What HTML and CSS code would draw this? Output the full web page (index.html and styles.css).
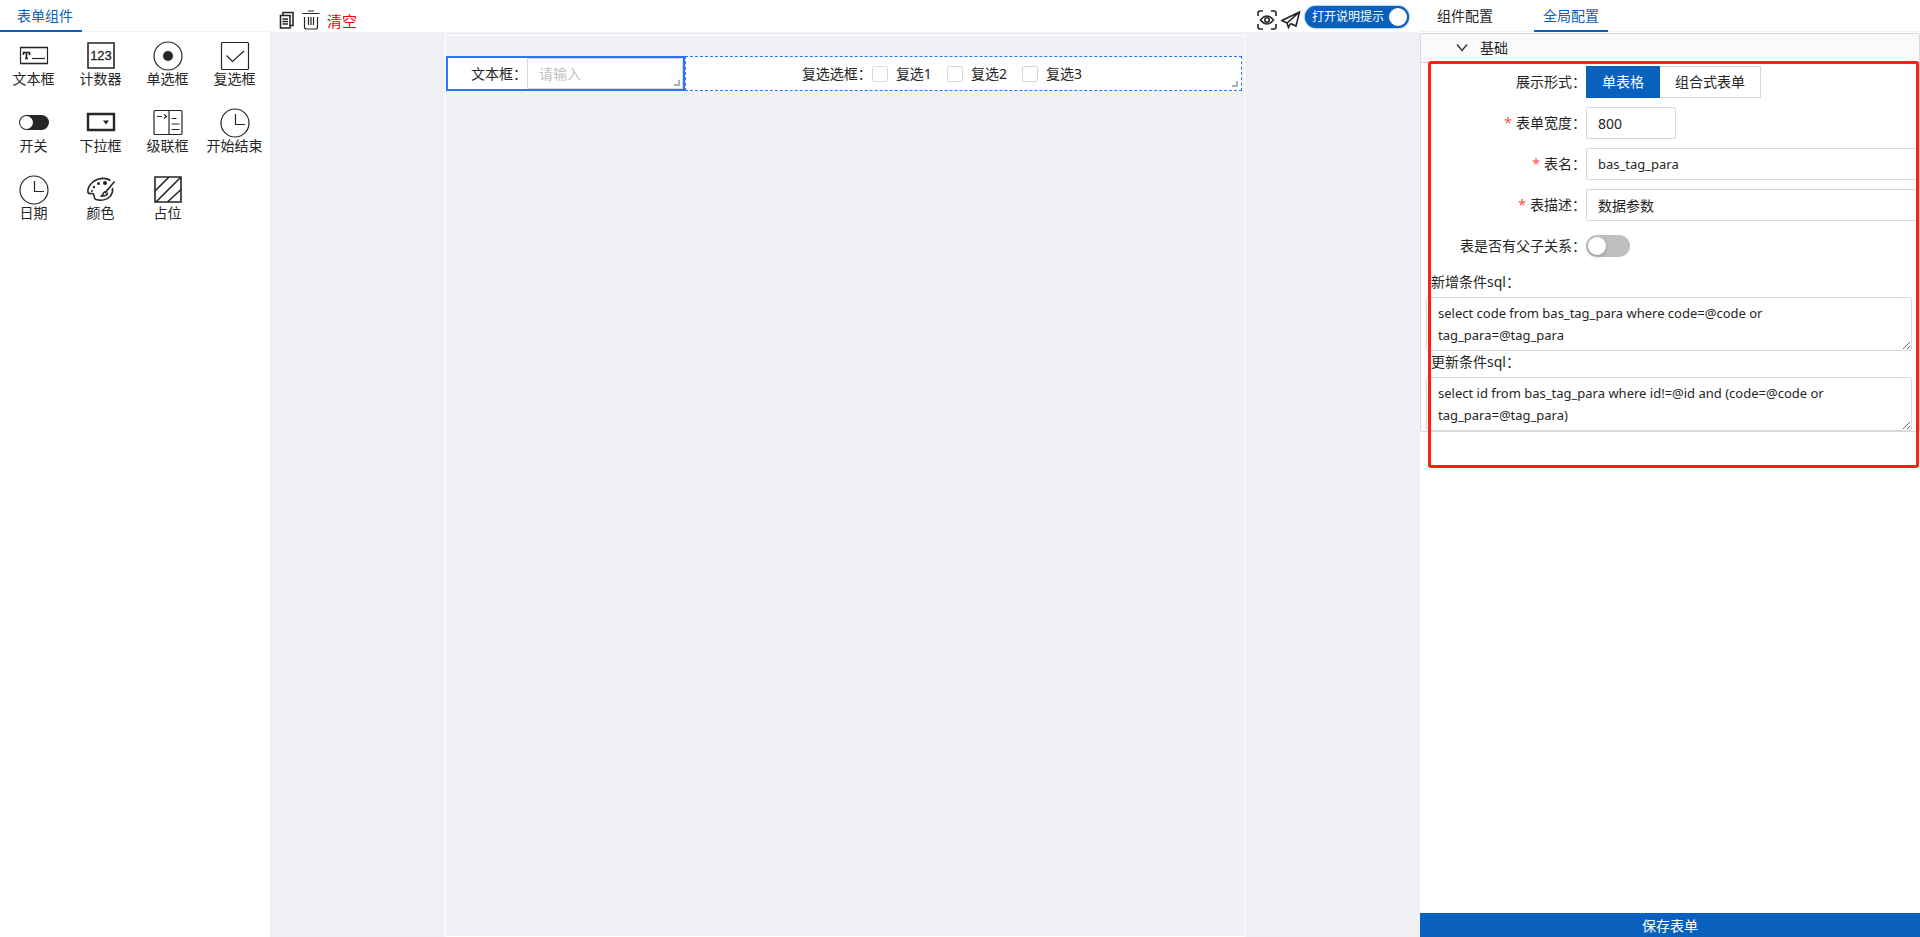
FILE: index.html
```html
<!DOCTYPE html>
<html lang="zh-CN">
<head>
<meta charset="utf-8">
<title>表单设计器</title>
<link rel="stylesheet" href="styles.css">
</head>
<body>
<div class="designer">
  <aside class="palette">
    <nav class="tabs"><button class="tab tab-active tab-palette">表单组件</button></nav>
    <div class="tools">
      <button class="tool"><svg viewBox="0 0 32 32"><path d="M2.500 7.500h27v16h-27z" class="s"/><path d="M2.500 7.500h27" class="b"/><path d="M2.500 23.500h27" class="b"/><path d="M5.500 15v-2.500h6V15M8.500 12.500v6M7 18.500h3" class="b"/><path d="M14 18.500h13" class="s"/></svg><span>文本框</span></button>
      <button class="tool"><svg viewBox="0 0 32 32"><path d="M3 3h26v25H3z" class="b"/><text x="16" y="20" class="digits">123</text></svg><span>计数器</span></button>
      <button class="tool"><svg viewBox="0 0 32 32"><circle cx="16" cy="16" r="14" class="s"/><circle cx="16" cy="16" r="5" class="f"/></svg><span>单选框</span></button>
      <button class="tool"><svg viewBox="0 0 32 32"><rect x="2.500" y="2.500" width="27" height="27" rx="1" class="s"/><path d="M7.500 15.500l6 6L25 11" class="s"/></svg><span>复选框</span></button>
      <button class="tool"><svg viewBox="0 0 32 32"><rect x="1" y="8" width="30" height="15" rx="7.500" class="f"/><circle cx="8.500" cy="15.500" r="6.500" class="w"/></svg><span>开关</span></button>
      <button class="tool"><svg viewBox="0 0 32 32"><path d="M3 7h26v16H3z" class="k"/><path d="M18 13.500h6l-3 4z" class="f"/></svg><span>下拉框</span></button>
      <button class="tool"><svg viewBox="0 0 32 32"><rect x="2" y="3.500" width="28" height="24" rx="1" class="s"/><path d="M17 3.500v24M5 9.500h5M12 7.500l2.500 2-2.500 2M19.500 11.500h5M19.500 17h8M19.500 22.500h8" class="s"/></svg><span>级联框</span></button>
      <button class="tool"><svg viewBox="0 0 32 32"><circle cx="16" cy="16" r="14" class="s"/><path d="M16.500 7v10.500H26" class="s"/></svg><span>开始结束</span></button>
      <button class="tool"><svg viewBox="0 0 32 32"><circle cx="16" cy="16" r="14" class="s"/><path d="M16.500 7v10.500H26" class="s"/></svg><span>日期</span></button>
      <button class="tool"><svg viewBox="0 0 32 32"><path d="M25.500 6.500C21 3.500 14 3.500 8.500 7.500c-5 4-6 8-5.500 11 1.500 2.500 4 0 5.500 1.500 1.500 2-.5 4 2.500 5.500 5 1.500 11 .5 14.500-3.500 2-2.500 2.500-5 2-8" class="b"/><path d="M29.500 7.500L20 19" class="b"/><path d="M21 17.500c-3 0-2.500 3-4.500 4.500 3 .5 6-1 6-3.500" class="b"/><circle cx="20" cy="9" r="2" class="f"/><circle cx="13.500" cy="9.500" r="1.500" class="f"/><circle cx="9" cy="13" r="1.200" class="f"/><circle cx="7" cy="17" r="1" class="f"/></svg><span>颜色</span></button>
      <button class="tool"><svg viewBox="0 0 32 32"><path d="M3 3h26v25H3z" class="b"/><path d="M3 17L17 3M4 28L28.500 3.500M15.500 28L29 15.500" class="b"/></svg><span>占位</span></button>
    </div>
  </aside>

  <main class="stage">
    <header class="toolbar">
      <button class="icon-button" aria-label="复制"><svg width="16" height="18" viewBox="0 0 16 18"><path d="M1.500 4.500h9.500v12.500H1.500zM4 4.500V1.500h10v13h-3M3.500 8h5.500M3.500 10.500h5.500M3.500 13h5.500" class="b"/></svg></button>
      <button class="icon-button" aria-label="删除"><svg width="18" height="20" viewBox="0 0 18 20"><path d="M6 1h6M.5 3.500h17M2.500 7v10q0 2 2 2h9q2 0 2-2V7M6.500 7v8M9 7v8M11.500 7v8" class="s"/></svg></button>
      <button class="clear">清空</button>
      <span class="spacer"></span>
      <button class="icon-button" aria-label="预览"><svg width="20" height="20" viewBox="0 0 20 20"><path d="M1 6V3q0-2 2-2h3M14 1h3q2 0 2 2v3M19 14v3q0 2-2 2h-3M6 19H3q-2 0-2-2v-3" class="b"/><path d="M3.500 10q6.500-8 13 0q-6.500 8-13 0z" class="b"/><circle cx="10" cy="10" r="2.200" class="b"/></svg></button>
      <button class="icon-button" aria-label="发布"><svg width="20" height="18" viewBox="0 0 20 18"><path d="M18.500 1L1 9.500l5 2.500L18.500 1 15 15l-5.500-2.500M6 12l1.500 4.500 2-4" class="b"/></svg></button>
      <label class="hint-switch"><input type="checkbox" checked><span>打开说明提示</span></label>
    </header>
    <div class="canvas">
      <section class="widget widget-selected">
        <label for="sample">文本框：</label>
        <input id="sample" class="sample-input" type="text" placeholder="请输入">
        <i class="grip"></i>
      </section>
      <section class="widget widget-checks">
        <span>复选选框：</span>
        <label class="check"><input type="checkbox">复选1</label>
        <label class="check"><input type="checkbox">复选2</label>
        <label class="check"><input type="checkbox">复选3</label>
        <i class="grip"></i>
      </section>
    </div>
  </main>

  <aside class="settings">
    <nav class="tabs tabs-settings"><button class="tab">组件配置</button><button class="tab tab-active">全局配置</button></nav>
    <section class="collapse">
      <button class="collapse-head"><svg width="12" height="12" viewBox="0 0 12 12"><path d="M1 2.500l5 6 5-6" class="s"/></svg>基础</button>
      <form class="form">
        <div class="row"><span class="row-label">展示形式：</span>
          <div class="segment">
            <label class="segment-on"><input type="radio" name="mode" checked>单表格</label>
            <label><input type="radio" name="mode">组合式表单</label>
          </div>
        </div>
        <div class="row"><label class="row-label required" for="width">表单宽度：</label><input class="field field-short" id="width" value="800"></div>
        <div class="row"><label class="row-label required" for="table">表名：</label><input class="field field-code" id="table" value="bas_tag_para"></div>
        <div class="row"><label class="row-label required" for="desc">表描述：</label><input class="field" id="desc" value="数据参数"></div>
        <div class="row"><label class="row-label" for="tree">表是否有父子关系：</label><input class="switch" id="tree" type="checkbox"></div>
        <label class="sql-label" for="insert">新增条件sql：</label>
        <textarea class="sql" id="insert" rows="2" spellcheck="false">select code from bas_tag_para where code=@code or tag_para=@tag_para</textarea>
        <label class="sql-label" for="update">更新条件sql：</label>
        <textarea class="sql" id="update" rows="2" spellcheck="false">select id from bas_tag_para where id!=@id and (code=@code or tag_para=@tag_para)</textarea>
      </form>
      <div class="highlight"></div>
    </section>
    <button class="save">保存表单</button>
  </aside>
</div>
</body>
</html>
```
FILE: styles.css
```css
* { box-sizing: border-box; }
body {
  margin: 0;
  background: #fff;
  color: #262626;
  font: 14px/22px "Noto Sans", "Noto Sans CJK SC", sans-serif;
}
button, input, textarea { font: inherit; color: inherit; }
button { margin: 0; padding: 0; border: 0; background: none; cursor: pointer; }
svg { display: block; }
.s, .b, .k { fill: none; stroke: #262626; stroke-width: 1.2; }
.b { stroke-width: 1.6; }
.k { stroke-width: 2.4; }
.f { fill: #262626; }
.w { fill: #fff; }
.digits { font: 13px "Liberation Sans", sans-serif; text-anchor: middle; fill: #262626; stroke: #262626; stroke-width: .3; }

.designer { display: grid; grid-template-columns: 270px 1fr 500px; min-height: 100vh; }

.tabs { display: flex; height: 32px; border-bottom: 1px solid #f0f0f0; }
.tab { height: 32px; padding: 2px 9px 0; border-bottom: 2px solid transparent; }
.tab-palette { padding-left: 17px; }
.tab-active { color: #0960bd; border-bottom-color: #0960bd; }

.tools { display: grid; grid-template-columns: repeat(4, 67px); grid-auto-rows: 67px; }
.tool { display: flex; flex-direction: column; align-items: center; justify-content: flex-start; padding-top: 8px; white-space: nowrap; line-height: 14px; }
.tool svg { width: 32px; height: 32px; }

.stage { display: flex; flex-direction: column; background: #eff1f5; }
.toolbar { display: flex; align-items: center; height: 32px; padding: 7px 11px 0 9px; background: #fff; }
.icon-button { margin-right: 7px; }
.clear { padding-top: 2px; color: #f00; font-size: 15px; }
.spacer { flex: 1; }
.spacer ~ .icon-button { margin-right: 4px; }
.hint-switch {
  display: flex; align-items: center; height: 22px; margin-bottom: 5px; padding: 0 2px 0 7px;
  border-radius: 11px; background: #0960bd; color: #fff; font-size: 12px; box-shadow: 0 0 2px #0960bd;
}
.hint-switch input { order: 2; appearance: none; width: 18px; height: 18px; margin: 0 0 0 5px; border-radius: 50%; background: #fff; }

.canvas {
  display: grid; grid-template-columns: 3fr 7fr; align-items: start; flex: 1;
  width: 800px; margin: 3px auto 0; padding: 20px 2px 0 0; border: 1px solid #fff;
}
.widget { position: relative; display: flex; align-items: center; height: 35px; background: #fff; }
.widget-selected { padding-left: 23px; border: 2px solid #2d73ff; }
.widget-checks { justify-content: center; padding-right: 28px; border: 1px dashed #2d73ff; }
.sample-input { flex: 1; width: 0; height: 31px; padding: 0 11px; border: 1px solid #d9d9d9; outline: 0; }
.sample-input::placeholder { color: #bfbfbf; opacity: 1; }
.grip { position: absolute; right: 3px; bottom: 3px; width: 6px; height: 6px; border: solid #b3b3b3; border-width: 0 2px 2px 0; }
.check { display: flex; align-items: center; margin-right: 15px; }
.check input { appearance: none; width: 16px; height: 16px; margin: 0 8px 0 0; border: 1px solid #d9d9d9; border-radius: 2px; background: #fff; }

.settings { display: flex; flex-direction: column; }
.tabs-settings { gap: 32px; padding-left: 8px; }
.collapse { position: relative; margin-top: 1px; border: 1px solid #d9d9d9; border-radius: 2px; }
.collapse-head { display: flex; align-items: center; gap: 12px; width: 100%; height: 29px; padding-left: 35px; border-bottom: 1px solid #d9d9d9; background: #fafafa; }
.form { display: flex; flex-direction: column; padding: 3px 7px 0 5px; }
.row { display: flex; align-items: center; height: 32px; margin: 0 -7px 9px 0; }
.row-label { flex: none; width: 160px; text-align: right; white-space: nowrap; }
.required::before { content: "*"; margin-right: 4px; color: #ff4d4f; }
.segment { display: flex; }
.segment label { height: 32px; padding: 0 15px; border: 1px solid #d9d9d9; border-left: 0; line-height: 30px; }
.segment .segment-on { padding-left: 16px; border-color: #0960bd; background: #0960bd; color: #fff; }
.segment input { position: absolute; opacity: 0; margin: 0; }
.field { flex: 1; width: 0; height: 32px; padding: 0 11px; border: 1px solid #d9d9d9; border-radius: 2px; outline: 0; }
.field-short { flex: none; width: 90px; }
.field-code, .sql { font-size: 13px; }
.switch { appearance: none; width: 44px; height: 22px; margin: 0; padding: 2px; border-radius: 11px; background: #bfbfbf; }
.switch::before { content: ""; display: block; width: 18px; height: 18px; border-radius: 50%; background: #fff; box-shadow: 0 2px 4px #00230b33; }
.sql-label { padding: 0 0 4px 5px; }
.sql { height: 54px; padding: 4px 32px 4px 11px; border: 1px solid #d9d9d9; border-radius: 2px; outline: 0; resize: vertical; }
.highlight { position: absolute; left: 7px; right: 0; top: 27px; bottom: -37px; border: 3px solid #ff1e12; border-radius: 3px; pointer-events: none; }
.save { height: 24px; margin-top: auto; padding-top: 2px; background: #0960bd; color: #fff; }
```
